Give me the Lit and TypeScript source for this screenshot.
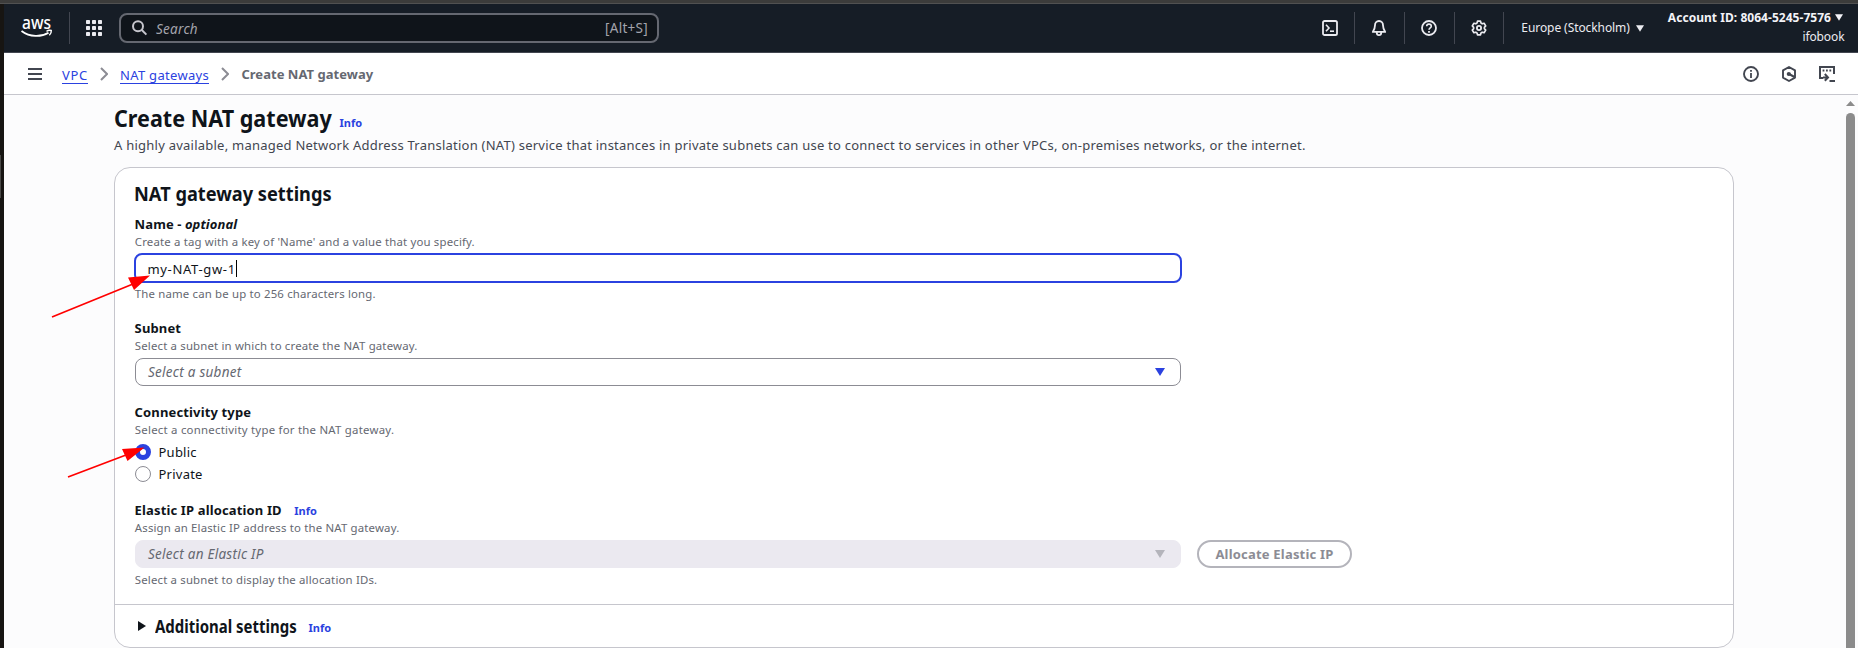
import { LitElement, html, svg, css } from "lit";
import { customElement } from "lit/decorators.js";

const caret = (cls: string) => html`<svg class="caret ${cls}" width="10" height="8" viewBox="0 0 10 8"><path d="M0 0H10L5 8Z" fill="currentColor" /></svg>`;

const chevron = html`<svg class="chevron" width="8" height="14" viewBox="0 0 8 14"><path d="M1 1L7 7L1 13" fill="none" stroke="#8c8c94" stroke-width="2" /></svg>`;

const icon = (body: unknown) => html`<svg width="16" height="16" viewBox="0 0 16 16" fill="none" stroke="currentColor" stroke-width="1.8">${body}</svg>`;

const icons = {
  search: svg`<circle cx="6" cy="6.2" r="5" stroke-width="2"/><path d="M9.8 10L14.4 14.6" stroke-width="2"/>`,
  shell: svg`<rect x="1" y="1" width="14" height="14" rx="1.6"/><path d="M4 4.8L7 8L4 11.2" stroke-width="1.6"/><path d="M8 11.2H12" stroke-width="1.6"/>`,
  bell: svg`<path d="M8 1C5.4 1 4 2.9 4 5.2C4 8.6 3.2 9.8 1.8 11.9H14.2C12.8 9.8 12 8.6 12 5.2C12 2.9 10.6 1 8 1Z" stroke-linejoin="round"/><path d="M5.8 12V13C5.8 14.3 6.8 15.1 8 15.1S10.2 14.3 10.2 13V12"/>`,
  help: svg`<circle cx="8" cy="8" r="7"/><path d="M5.7 6.3C5.7 4.9 6.7 4.1 8 4.1S10.3 5 10.3 6.2C10.3 7.9 8 7.8 8 9.8" stroke-width="1.6"/><path d="M8 11V12.7" stroke-width="1.8"/>`,
  gear: svg`<circle cx="8" cy="8" r="2.1"/><path d="M6.5 1.2H9.5L10 3.1L11.2 3.8L13.1 3.3L14.7 5.9L13.4 7.3V8.7L14.7 10.1L13.1 12.7L11.2 12.2L10 12.9L9.5 14.8H6.5L6 12.9L4.8 12.2L2.9 12.7L1.3 10.1L2.6 8.7V7.3L1.3 5.9L2.9 3.3L4.8 3.8L6 3.1Z" stroke-linejoin="round" stroke-width="1.7"/>`,
  info: svg`<circle cx="8" cy="8" r="7" stroke-width="1.9"/><path d="M8 7V12M8 4V5.8" stroke-width="1.8"/>`,
  hexagon: svg`<path d="M8 1L14 4.4V11.6L8 15L2 11.6V4.4Z" stroke-width="1.9" stroke-linejoin="round"/><circle cx="7.8" cy="8" r="2.1" fill="currentColor" stroke="none"/><path d="M8 8L13.5 11" stroke-width="2"/>`,
  screen: svg`<path d="M4 12H1V1H15V8" stroke-width="2"/><path d="M3.6 4.5H5.4M7 4.5H8.8M10.4 4.5H12.2" stroke-width="1.8"/><path d="M4 11.4H9M5.8 8L9 11.4L5.8 14.8" stroke-width="2"/><path d="M10.5 15H16" stroke-width="2"/>`,
};

@customElement("app-root")
export class AppRoot extends LitElement {
  static styles = css`
    :host { display: block; position: relative; width: 1858px; height: 648px; overflow: hidden; background: #fcfcfd; font: 13px/20px "Noto Sans", sans-serif; color: #0f141a; }
    * { box-sizing: border-box; }
    svg { display: block; flex: none; }
    .frame { display: grid; grid-template: 4px 1fr / 4px 1fr; height: 648px; }
    .chrome { grid-column: 1 / 3; background: linear-gradient(#3c3c3b 0 3px, #515151 3px); }
    .edge { background: linear-gradient(#4a4947, #4a4947) 0 151px / 1px 43px no-repeat, #171512; }
    .console { display: flex; flex-direction: column; min-width: 0; }
    .top { display: flex; height: 49px; background: #161d26; border-bottom: 1px solid #424650; color: #ebebf0; white-space: nowrap; align-items: center; flex: none; }
    .logo { margin: 0 16px 0 16px; overflow: visible; }
    .sep { width: 1px; height: 32px; background: #424650; flex: none; }
    .grid { margin: 0 17px 0 16px; }
    .search { display: flex; align-items: center; width: 540px; height: 30px; border: 2px solid #656871; border-radius: 8px; background: #0f141a; padding: 0 9px 0 11px; color: #a4a4ad; font-size: 13.5px; letter-spacing: .28px; flex: none; }
    .search svg { color: #c6c6cd; }
    .search i { margin-left: 8px; padding-top: 2px; flex: 1; }
    .tools { display: flex; align-items: center; margin-left: auto; }
    .tools svg { margin: 0 16.4px; }
    .region { margin-left: 17px; font-size: 12px; letter-spacing: -.08px; width: 109px; }
    .tools .caret { margin: 0 0 0 6px; width: 8px; height: 7px; }
    .account { margin: 0 15px 0 23.5px; text-align: right; font-size: 12px; line-height: 19px; padding-bottom: 3px; }
    .account b { display: flex; align-items: center; color: #f3f3f7; letter-spacing: .04px; }
    .account b .caret { margin-left: 4px; }
    .account .user { letter-spacing: -.1px; margin-right: -1.5px; }
    .bar { display: flex; align-items: center; height: 42px; border-bottom: 1px solid #c6c6cd; background: #fff; padding: 0 23px 0 24px; flex: none; }
    .bar > svg { color: #424650; }
    .crumb { color: #2b42e0; border-bottom: 1px solid #2b42e0; line-height: 20px; height: 19px; white-space: nowrap; position: relative; top: .5px; }
    .vpc { margin-left: 20px; letter-spacing: .7px; }
    .gws { letter-spacing: .31px; }
    .chevron { margin: 0 12px; }
    .here { color: #656871; letter-spacing: .03px; margin-left: .4px; }
    .icons { display: flex; gap: 22px; margin-left: auto; color: #424650; }
    .main { padding: 8px 0 0 110px; }
    h1, h2, h3 { margin: 0; font-weight: 700; white-space: nowrap; }
    .narrow { transform: scaleX(var(--fit)); transform-origin: left; display: inline-block; }
    .head { display: flex; align-items: baseline; margin-bottom: 2px; }
    h1 { width: 218px; font-size: 23px; line-height: 30px; }
    h1 .narrow { --fit: .938; }
    .info { color: #2b42e0; font-size: 11px; font-weight: 700; letter-spacing: 0; }
    .head .info { margin-left: 7.5px; }
    .desc { color: #424650; letter-spacing: .24px; white-space: nowrap; margin-bottom: 12px; }
    .card { width: 1620px; height: 481px; border: 1px solid #c6c6cd; border-radius: 16px; background: #fff; }
    .body { padding: 13px 20px 0; height: 436px; }
    h2 { font-size: 19.5px; line-height: 26px; height: 33px; margin-left: -.6px; }
    h2 .narrow { --fit: .934; }
    .label { display: flex; font-weight: 700; line-height: 20px; letter-spacing: .14px; white-space: pre; margin-left: -.4px; }
    .label .info { margin: 1px 0 -1px 12.5px; }
    .name { letter-spacing: .08px; }
    .hint { color: #656871; font-size: 11.4px; line-height: 16px; letter-spacing: .17px; margin-left: -.2px; }
    .conn-hint { letter-spacing: .24px; }
    .field { width: 1046px; height: 28px; border: 1px solid #8c8c94; border-radius: 8px; margin: 4px 0; padding: 0 15px 0 12px; display: flex; align-items: center; justify-content: space-between; font-size: 13.5px; letter-spacing: .26px; flex: none; }
    .focus { width: 1048px; height: 30px; border: 2px solid #2b42e0; margin: 3px -1px 3px; padding: 1px 0 0 11.5px; justify-content: flex-start; font-size: 13px; letter-spacing: .66px; }
    .cursor { width: 1px; height: 17px; background: #000; }
    .field i { color: #656871; }
    .blue { color: #2b42e0; }
    .off { background: #ebe9f0; border-color: #ebe9f0; color: #b4b4bb; }
    .subnet { margin-top: 16px; }
    .conn { margin-top: 16px; }
    .first { margin-top: 3px; }
    .radio { display: flex; align-items: center; height: 22px; letter-spacing: .24px; }
    .dot { width: 16px; height: 16px; border: 1px solid #8c8c94; border-radius: 50%; margin-right: 7.5px; }
    .on { border: 5px solid #2b42e0; }
    .eip { margin-top: 15px; }
    .line { display: flex; gap: 16px; align-items: center; }
    .btn { width: 155px; height: 28px; border: 2px solid #b4b4bb; border-radius: 14px; color: #8c8c94; font: inherit; font-weight: 700; letter-spacing: .2px; background: #fff; padding: 0; white-space: nowrap; }
    .more { display: flex; align-items: center; height: 43px; border-top: 1px solid #c6c6cd; padding-left: 23px; }
    .tri { margin-right: 8.5px; }
    h3 { font-size: 17.5px; width: 141px; line-height: 24px; }
    h3 .narrow { --fit: .855; }
    .more .info { margin: 3px 0 0 13px; }
    .scroll { position: absolute; top: 101px; right: 3px; }
    .marks { position: absolute; inset: 0; }
  `;

  render() {
    return html`
      <div class="frame">
        <div class="chrome"></div>
        <div class="edge"></div>
        <div class="console">
          <div class="top">
            <svg class="logo" width="33" height="38" viewBox="0 -8 33 38" fill="#fff">
              <text x="2" y="11.7" font-size="18" font-weight="500" textLength="29" lengthAdjust="spacingAndGlyphs">aws</text>
              <path d="M1.5 14C10 20.3 21 20.3 28.5 15.7" fill="none" stroke="#fff" stroke-width="1.8" />
              <path d="M26.5 14.3C28.5 13 30 13 31.3 13.5C31.5 15.2 30.8 16.8 29.3 18.3" fill="none" stroke="#fff" stroke-width="1.4" />
            </svg>
            <div class="sep"></div>
            <svg class="grid" width="16" height="16" viewBox="0 0 16 16" fill="#ebebf0">
              ${[0, 6, 12].map((y) => [0, 6, 12].map((x) => svg`<rect x=${x} y=${y} width="4" height="4" rx=".7"/>`))}
            </svg>
            <div class="search">${icon(icons.search)}<i>Search</i><span>[Alt+S]</span></div>
            <div class="tools">
              ${[icons.shell, icons.bell, icons.help, icons.gear].map((i) => html`${icon(i)}<div class="sep"></div>`)}
              <span class="region">Europe (Stockholm)</span>${caret("")}
              <div class="account"><b>Account ID: 8064-5245-7576 ${caret("")}</b><div class="user">ifobook</div></div>
            </div>
          </div>
          <div class="bar">
            <svg width="14" height="12" viewBox="0 0 14 12"><path d="M0 1H14M0 6H14M0 11H14" stroke="currentColor" stroke-width="2" /></svg>
            <span class="crumb vpc">VPC</span>${chevron}<span class="crumb gws">NAT gateways</span>${chevron}<b class="here">Create NAT gateway</b>
            <div class="icons">${icon(icons.info)}${icon(icons.hexagon)}${icon(icons.screen)}</div>
          </div>
          <div class="main">
            <div class="head"><h1><span class="narrow">Create NAT gateway</span></h1><span class="info">Info</span></div>
            <div class="desc">A highly available, managed Network Address Translation (NAT) service that instances in private subnets can use to connect to services in other VPCs, on-premises networks, or the internet.</div>
            <div class="card">
              <div class="body">
                <h2><span class="narrow">NAT gateway settings</span></h2>
                <div class="label name">Name - <i>optional</i></div>
                <div class="hint">Create a tag with a key of 'Name' and a value that you specify.</div>
                <div class="field focus"><span>my-NAT-gw-1</span><span class="cursor"></span></div>
                <div class="hint">The name can be up to 256 characters long.</div>
                <div class="label subnet">Subnet</div>
                <div class="hint">Select a subnet in which to create the NAT gateway.</div>
                <div class="field"><i>Select a subnet</i>${caret("blue")}</div>
                <div class="label conn">Connectivity type</div>
                <div class="hint conn-hint">Select a connectivity type for the NAT gateway.</div>
                <div class="radio first"><span class="dot on"></span>Public</div>
                <div class="radio"><span class="dot"></span>Private</div>
                <div class="label eip">Elastic IP allocation ID<span class="info">Info</span></div>
                <div class="hint">Assign an Elastic IP address to the NAT gateway.</div>
                <div class="line"><div class="field off"><i>Select an Elastic IP</i>${caret("")}</div><button class="btn">Allocate Elastic IP</button></div>
                <div class="hint">Select a subnet to display the allocation IDs.</div>
              </div>
              <div class="more">
                <svg class="tri" width="8" height="10" viewBox="0 0 8 10"><path d="M0 0L8 5L0 10Z" fill="#0f141a" /></svg>
                <h3><span class="narrow">Additional settings</span></h3><span class="info">Info</span>
              </div>
            </div>
          </div>
        </div>
      </div>
      <svg class="scroll" width="9" height="547" viewBox="0 0 9 547" fill="#8b8b8b"><path d="M0 5L4.5 0L9 5Z" /><rect y="12" width="9" height="560" rx="4.5" /></svg>
      <svg class="marks" width="1858" height="648" viewBox="0 0 1858 648" fill="#f00" stroke="#f00">
        <path d="M52 317L133 284M68 477L126 455" stroke-width="1.7" />
        <path d="M150 275.5L128 277.5L134 290Z M144.5 447.5L122 449L127.5 461Z" stroke="none" />
      </svg>
    `;
  }
}
